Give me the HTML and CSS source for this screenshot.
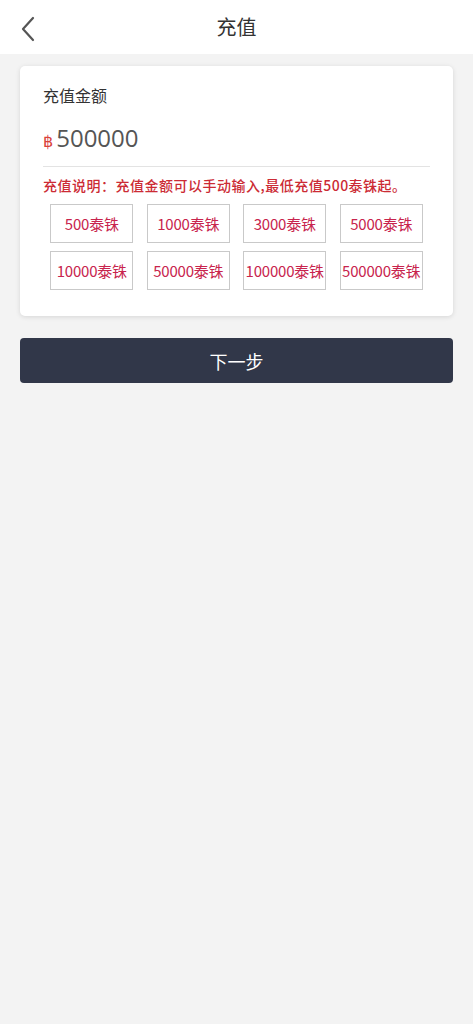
FILE: index.html
```html
<!DOCTYPE html>
<html lang="zh">
<head>
<meta charset="utf-8">
<link rel="stylesheet" href="styles.css">
</head>
<body>
<header class="topbar">
  <span class="back"><svg width="16" height="26" viewBox="0 0 16 26"><path d="M13 2 L3 13 L13 24" fill="none" stroke="#555" stroke-width="2.2" stroke-linecap="round" stroke-linejoin="round"/></svg></span>
  <h1 class="title">充值</h1>
</header>
<main class="main">
  <section class="card">
    <div class="label">充值金额</div>
    <div class="amount"><span class="cur">฿</span><span class="val">500000</span></div>
    <div class="note">充值说明：充值金额可以手动输入,最低充值500泰铢起。</div>
    <div class="grid">
      <div class="opt">500泰铢</div>
      <div class="opt">1000泰铢</div>
      <div class="opt">3000泰铢</div>
      <div class="opt">5000泰铢</div>
      <div class="opt">10000泰铢</div>
      <div class="opt">50000泰铢</div>
      <div class="opt">100000泰铢</div>
      <div class="opt">500000泰铢</div>
    </div>
  </section>
  <button class="next">下一步</button>
</main>
</body>
</html>
```
FILE: styles.css
```css
* { box-sizing: border-box; }
html, body { margin: 0; padding: 0; }
body {
  background: #f3f3f3;
  font-family: "Noto Sans CJK SC", "Noto Sans", sans-serif;
  width: 473px;
  min-height: 1024px;
}
.topbar {
  height: 54px;
  background: #fff;
  display: flex;
  align-items: center;
  justify-content: center;
  position: relative;
}
.back {
  position: absolute;
  left: 20px;
  top: 16px;
  display: flex;
}
.title {
  margin: 0;
  font-size: 20px;
  font-weight: 400;
  color: #333;
  line-height: 1;
}
.main {
  padding: 12px 20px 0;
}
.card {
  background: #fff;
  border-radius: 5px;
  box-shadow: 0 1px 5px rgba(0,0,0,0.12);
  padding: 18px 23px 26px;
  height: 250px;
}
.label {
  font-size: 16px;
  color: #333;
  line-height: 22px;
}
.amount {
  display: flex;
  align-items: baseline;
  margin-top: 16px;
  height: 32px;
  line-height: 32px;
}
.cur {
  color: #d9413a;
  font-size: 16px;
  margin-right: 3px;
  font-family: "DejaVu Sans", sans-serif;
}
.val {
  color: #555;
  font-size: 24px;
  font-family: "Open Sans", "Noto Sans", sans-serif;
}
.note {
  border-top: 1px solid #e3e3e3;
  margin-top: 12px;
  padding-top: 8px;
  font-size: 14px;
  color: #cc2b35;
  font-weight: 500;
  line-height: 20px;
  letter-spacing: 0.5px;
  white-space: nowrap;
}
.grid {
  display: grid;
  grid-template-columns: repeat(4, 83px);
  column-gap: 13.5px;
  row-gap: 8px;
  justify-content: center;
  margin-top: 9px;
}
.opt {
  height: 39px;
  border: 1px solid #c9c9c9;
  display: flex;
  align-items: center;
  justify-content: center;
  font-size: 15px;
  color: #c8244d;
  white-space: nowrap;
  letter-spacing: -0.2px;
}
.next {
  display: block;
  width: 100%;
  margin-top: 22px;
  height: 45px;
  border: none;
  border-radius: 4px;
  background: #313749;
  color: #fff;
  font-size: 18px;
  font-family: "Noto Sans CJK SC", sans-serif;
}
```
